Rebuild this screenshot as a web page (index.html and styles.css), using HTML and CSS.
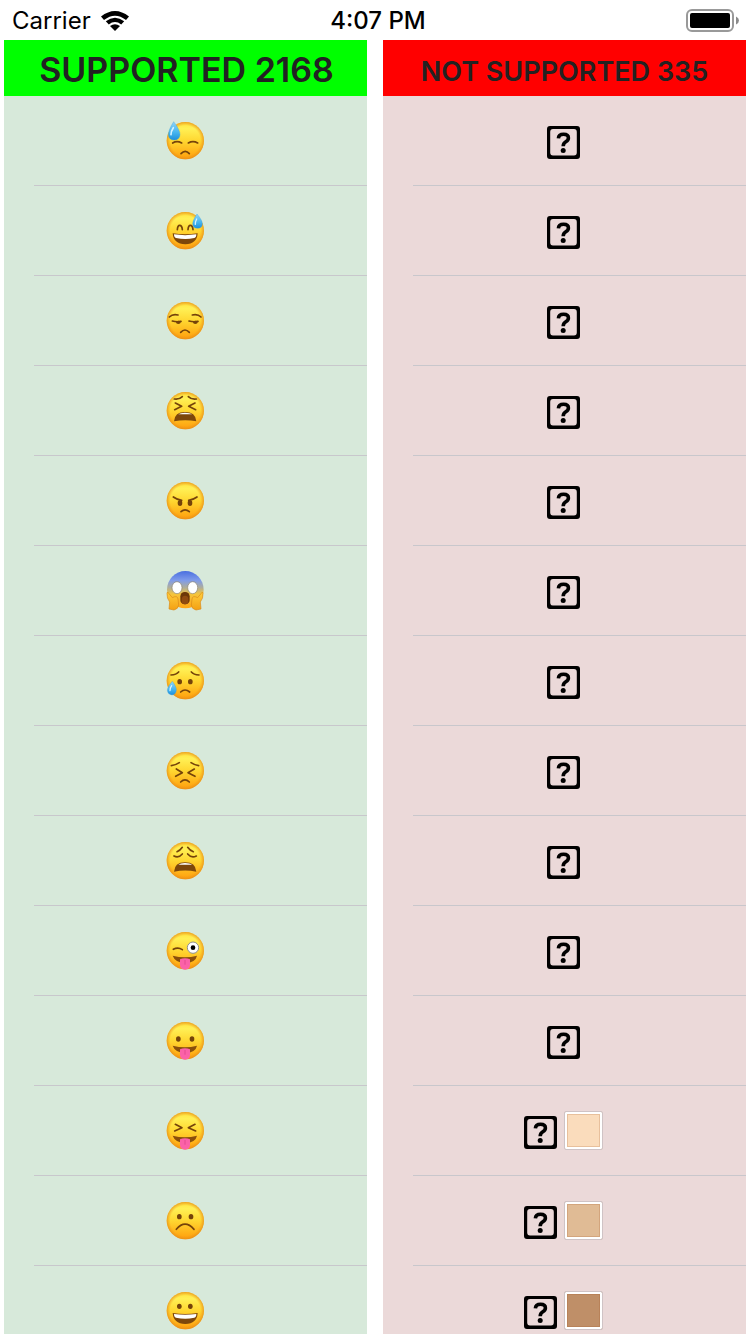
FILE: index.html
```html
<!DOCTYPE html>
<html lang="en">
<head>
<meta charset="utf-8">
<meta name="viewport" content="width=device-width, initial-scale=1">
<title>Emoji support</title>
<link rel="stylesheet" href="styles.css">
</head>
<body>
<svg class="defs" aria-hidden="true">
  <defs>
    <linearGradient id="skin" x1="0" y1="0" x2="0" y2="1">
      <stop offset="0" stop-color="#ffe23c"/><stop offset=".18" stop-color="#fff055"/><stop offset=".5" stop-color="#ffd731"/><stop offset="1" stop-color="#ff9d0c"/>
    </linearGradient>
    <radialGradient id="rim">
      <stop offset=".8" stop-color="#f09a1c" stop-opacity="0"/><stop offset="1" stop-color="#e58a18" stop-opacity=".75"/>
    </radialGradient>
    <linearGradient id="fright" x1="0" y1="0" x2="0" y2="1">
      <stop offset="0" stop-color="#4a6fe0"/><stop offset=".25" stop-color="#7f9bea"/><stop offset=".45" stop-color="#b0ae98"/><stop offset=".62" stop-color="#f5c53c"/><stop offset="1" stop-color="#ffa514"/>
    </linearGradient>
    <linearGradient id="water" x1="0" y1="0" x2="0" y2="1">
      <stop offset="0" stop-color="#8fd4f8"/><stop offset=".6" stop-color="#45b4ee"/><stop offset="1" stop-color="#1d8fdc"/>
    </linearGradient>
    <linearGradient id="palm" x1="0" y1="0" x2="0" y2="1">
      <stop offset="0" stop-color="#ffcf3e"/><stop offset="1" stop-color="#f3a013"/>
    </linearGradient>
    <symbol id="face" viewBox="30 18 120 120">
      <circle cx="91" cy="77" r="56" fill="url(#skin)"/>
      <circle cx="91" cy="77" r="56" fill="url(#rim)"/>
    </symbol>
    <symbol id="tongue" viewBox="30 18 120 120">
      <path d="M53 92Q90 101 126 92Q122 112 91 115Q60 112 53 92Z" fill="#8a4f0c"/>
      <path d="M75 103Q90 97 105 103V121Q104 134 90 134Q76 134 75 121Z" fill="#fb62a8"/>
      <path d="M90 105V119" stroke="#e44a90" stroke-width="3"/>
    </symbol>
    <symbol id="tofu" viewBox="0 0 33 36">
      <path fill-rule="evenodd" d="M3 3H30Q33 3 33 6V33Q33 36 30 36H3Q0 36 0 33V6Q0 3 3 3ZM6 6Q3.2 6 3.2 9V29.6Q3.2 32.6 6 32.6H27Q29.8 32.6 29.8 29.6V9Q29.8 6 27 6Z"/>
      <path d="M11.4 15.4Q11.6 11.2 16.6 11.2Q21.4 11.2 21.4 14.9Q21.4 17.2 18.8 18.7Q16.2 20.2 16.2 23.2" fill="none" stroke="#000" stroke-width="3.6"/>
      <circle cx="16.2" cy="27.4" r="2.5"/>
    </symbol>
  </defs>
</svg>

<header class="status">
  <div class="status-left">
    <span>Carrier</span>
    <svg class="wifi" viewBox="0 0 28 20" role="img" aria-label="Wi-Fi">
      <path d="M0 5.5Q14-5.5 28 5.5L25 9Q14 .5 3 9Z"/>
      <path d="M4.8 10.3Q14 3.3 23.2 10.3L20.2 13.4Q14 8.5 7.8 13.4Z"/>
      <path d="M9 15Q14 11.5 19 15L14 20Z"/>
    </svg>
  </div>
  <time class="clock">4:07 PM</time>
  <div class="status-right">
    <svg class="battery" viewBox="0 0 54 24" role="img" aria-label="Battery full">
      <rect x="1" y="1" width="46" height="21" rx="5" fill="#fff" stroke="#999" stroke-width="2"/>
      <rect x="4" y="4" width="40" height="15" rx="2"/>
      <path d="M50 7.5Q53 9 53 11.5Q53 14 50 15.5Z" fill="#8a8a8a"/>
    </svg>
  </div>
</header>

<main class="columns">
  <section class="column supported">
    <h2 class="title title-large">SUPPORTED 2168</h2>
    <ul class="list">
      <li class="row"><svg class="emoji" viewBox="30 18 120 120" role="img" aria-label="Downcast face with sweat"><use href="#face" x="30" y="18" width="120" height="120"/>
        <g class="ink"><path d="M53 84Q66 76 80 84M100 84Q114 76 128 84M78 116Q91 102 103 116"/></g>
        <path d="M56 20Q76 46 75 59Q74 74 58 75Q41 75 40 59Q40 45 56 20Z" fill="url(#water)" stroke="#3b9fda" stroke-width="1"/><path d="M55 38Q47 50 48 59" fill="none" stroke="#d5f2ff" stroke-width="5" stroke-linecap="round"/></svg></li>
      <li class="row"><svg class="emoji" viewBox="30 18 120 120" role="img" aria-label="Grinning face with sweat"><use href="#face" x="30" y="18" width="120" height="120"/>
        <g class="ink"><path d="M67 74Q68 61 74 61Q81 61 82 74M99 74Q100 61 106 61Q113 61 114 74"/></g>
        <path d="M53 85Q90 91 128 85Q126 117 91 118Q55 117 53 85Z" fill="#7d470b"/><path d="M57 88Q90 93 124 88Q124 98 118 99Q91 105 63 99Q57 98 57 88Z" fill="#fff"/>
        <path d="M126 27Q143 47 142 57Q141 70 128 70Q114 70 113 57Q113 46 126 27Z" fill="url(#water)" stroke="#3b9fda" stroke-width="1"/><path d="M125 42Q120 52 121 58" fill="none" stroke="#d5f2ff" stroke-width="4" stroke-linecap="round"/></svg></li>
      <li class="row"><svg class="emoji" viewBox="30 18 120 120" role="img" aria-label="Unamused face"><use href="#face" x="30" y="18" width="120" height="120"/>
        <g class="ink"><path d="M43 66Q53 56 69 60M112 60Q128 56 138 66M52 78Q65 82 78 79M102 78Q115 82 129 79M77 112Q90 98 103 112"/></g><ellipse class="dot" cx="70" cy="82" rx="7" ry="5"/><ellipse class="dot" cx="121" cy="82" rx="7" ry="5"/></svg></li>
      <li class="row"><svg class="emoji" viewBox="30 18 120 120" role="img" aria-label="Tired face"><use href="#face" x="30" y="18" width="120" height="120"/>
        <g class="ink"><path d="M58 42Q73 44 82 35M100 35Q109 44 124 42M61 54L80 64L59 74M120 54L101 64L122 74"/></g>
        <path d="M57 109Q59 81 90 81Q122 81 124 109Q91 102 57 109Z" fill="#7d470b"/><path d="M70 88Q76 83 90 83Q105 83 111 88Q91 88 70 88Z" fill="#fff"/></svg></li>
      <li class="row"><svg class="emoji" viewBox="30 18 120 120" role="img" aria-label="Angry face"><use href="#face" x="30" y="18" width="120" height="120"/>
        <g class="ink"><path d="M55 66Q66 74 80 76M101 76Q115 74 126 66M78 110Q90 99 103 110"/></g><ellipse class="dot" cx="75" cy="84" rx="7" ry="9"/><ellipse class="dot" cx="105" cy="84" rx="7" ry="9"/></svg></li>
      <li class="row"><svg class="emoji" viewBox="30 18 120 120" role="img" aria-label="Face screaming in fear"><ellipse cx="91" cy="74" rx="55" ry="56" fill="url(#fright)"/>
        <ellipse cx="66" cy="68" rx="15" ry="18" fill="#fff" stroke="#8d8370" stroke-width="2"/><ellipse cx="113" cy="68" rx="15" ry="18" fill="#fff" stroke="#8d8370" stroke-width="2"/>
        <rect x="76" y="81" width="28" height="37" rx="13" fill="#6c3709"/><path d="M80 114V102Q81 92 90 92Q100 92 100 102V114Q90 122 80 114Z" fill="#8f4a10"/>
        <path d="M42 132L44 111Q35 101 36 84Q37 77 42 86L52 98Q67 90 69 102L71 120Q70 132 57 135Z" fill="url(#palm)" stroke="#d98918" stroke-width="2"/>
        <path d="M138 132L136 111Q145 101 144 84Q143 77 138 86L128 98Q113 90 111 102L109 120Q110 132 123 135Z" fill="url(#palm)" stroke="#d98918" stroke-width="2"/></svg></li>
      <li class="row"><svg class="emoji" viewBox="30 18 120 120" role="img" aria-label="Sad but relieved face"><use href="#face" x="30" y="18" width="120" height="120"/>
        <g class="ink"><path d="M48 60Q64 59 71 51M109 51Q116 59 132 60M77 111Q90 99 104 111"/></g><ellipse class="dot" cx="74" cy="80" rx="7" ry="8"/><ellipse class="dot" cx="106" cy="80" rx="7" ry="8"/>
        <path d="M52 79Q65 97 64 105Q63 119 51 120Q38 119 37 106Q37 96 52 79Z" fill="url(#water)" stroke="#3b9fda" stroke-width="1"/><path d="M50 92Q44 100 45 107" fill="none" stroke="#d5f2ff" stroke-width="4" stroke-linecap="round"/></svg></li>
      <li class="row"><svg class="emoji" viewBox="30 18 120 120" role="img" aria-label="Persevering face"><use href="#face" x="30" y="18" width="120" height="120"/>
        <g class="ink"><path d="M49 62Q61 61 73 53M108 53Q120 61 131 62M64 72L82 83L62 94M118 72L99 83L120 94M77 111Q90 98 103 111"/></g></svg></li>
      <li class="row"><svg class="emoji" viewBox="30 18 120 120" role="img" aria-label="Weary face"><use href="#face" x="30" y="18" width="120" height="120"/>
        <g class="ink"><path d="M66 50Q76 46 82 37M98 37Q104 46 115 50M57 63Q70 71 82 57M98 57Q110 71 124 63"/></g>
        <path d="M57 110Q59 82 90 82Q122 82 124 110Q91 103 57 110Z" fill="#7d470b"/><path d="M70 89Q76 84 90 84Q105 84 111 89Q91 89 70 89Z" fill="#fff"/></svg></li>
      <li class="row"><svg class="emoji" viewBox="30 18 120 120" role="img" aria-label="Winking face with tongue"><use href="#face" x="30" y="18" width="120" height="120"/>
        <use href="#tongue" x="30" y="18" width="120" height="120"/><g class="ink"><path d="M55 73Q69 65 82 74"/></g>
        <circle cx="114" cy="68" r="17" fill="#fff" stroke="#8f8f8f" stroke-width="3"/><circle cx="114" cy="68" r="7"/></svg></li>
      <li class="row"><svg class="emoji" viewBox="30 18 120 120" role="img" aria-label="Face with tongue"><use href="#face" x="30" y="18" width="120" height="120"/>
        <use href="#tongue" x="30" y="18" width="120" height="120"/><ellipse class="dot" cx="70" cy="72" rx="7" ry="8"/><ellipse class="dot" cx="111" cy="72" rx="7" ry="8"/></svg></li>
      <li class="row"><svg class="emoji" viewBox="30 18 120 120" role="img" aria-label="Squinting face with tongue"><use href="#face" x="30" y="18" width="120" height="120"/>
        <use href="#tongue" x="30" y="18" width="120" height="120"/><g class="ink"><path d="M61 58L81 68L59 78M120 58L100 68L122 78"/></g></svg></li>
      <li class="row"><svg class="emoji" viewBox="30 18 120 120" role="img" aria-label="Frowning face"><use href="#face" x="30" y="18" width="120" height="120"/>
        <g class="ink"><path d="M64 103Q90 72 117 103"/></g><ellipse class="dot" cx="73" cy="65" rx="7" ry="8"/><ellipse class="dot" cx="108" cy="65" rx="7" ry="8"/></svg></li>
      <li class="row"><svg class="emoji" viewBox="30 18 120 120" role="img" aria-label="Grinning face"><use href="#face" x="30" y="18" width="120" height="120"/>
        <path d="M53 84Q90 90 128 84Q126 116 91 117Q55 116 53 84Z" fill="#7d470b"/><path d="M57 87Q90 92 124 87Q124 97 118 98Q91 104 63 98Q57 97 57 87Z" fill="#fff"/>
        <ellipse class="dot" cx="73" cy="64" rx="7" ry="8"/><ellipse class="dot" cx="106" cy="64" rx="7" ry="8"/></svg></li>
    </ul>
  </section>

  <section class="column unsupported">
    <h2 class="title title-small">NOT SUPPORTED 335</h2>
    <ul class="list">
      <li class="row"><svg class="tofu" role="img" aria-label="Missing glyph"><use href="#tofu"/></svg></li>
      <li class="row"><svg class="tofu" role="img" aria-label="Missing glyph"><use href="#tofu"/></svg></li>
      <li class="row"><svg class="tofu" role="img" aria-label="Missing glyph"><use href="#tofu"/></svg></li>
      <li class="row"><svg class="tofu" role="img" aria-label="Missing glyph"><use href="#tofu"/></svg></li>
      <li class="row"><svg class="tofu" role="img" aria-label="Missing glyph"><use href="#tofu"/></svg></li>
      <li class="row"><svg class="tofu" role="img" aria-label="Missing glyph"><use href="#tofu"/></svg></li>
      <li class="row"><svg class="tofu" role="img" aria-label="Missing glyph"><use href="#tofu"/></svg></li>
      <li class="row"><svg class="tofu" role="img" aria-label="Missing glyph"><use href="#tofu"/></svg></li>
      <li class="row"><svg class="tofu" role="img" aria-label="Missing glyph"><use href="#tofu"/></svg></li>
      <li class="row"><svg class="tofu" role="img" aria-label="Missing glyph"><use href="#tofu"/></svg></li>
      <li class="row"><svg class="tofu" role="img" aria-label="Missing glyph"><use href="#tofu"/></svg></li>
      <li class="row"><svg class="tofu" role="img" aria-label="Missing glyph"><use href="#tofu"/></svg><span class="swatch tone-light"></span></li>
      <li class="row"><svg class="tofu" role="img" aria-label="Missing glyph"><use href="#tofu"/></svg><span class="swatch tone-medium-light"></span></li>
      <li class="row"><svg class="tofu" role="img" aria-label="Missing glyph"><use href="#tofu"/></svg><span class="swatch tone-medium"></span></li>
    </ul>
  </section>
</main>
</body>
</html>
```
FILE: styles.css
```css
* {
  box-sizing: border-box;
}

body {
  margin: 0;
  height: 100vh;
  display: flex;
  flex-direction: column;
  background: #fff;
  color: #000;
  font-family: Inter, "Liberation Sans", sans-serif;
}

.defs {
  position: absolute;
  width: 0;
  height: 0;
}

.status {
  display: grid;
  grid-template-columns: 1fr auto 1fr;
  align-items: center;
  height: 40px;
  padding: 2px 10px 0 12px;
  font-size: 24px;
  line-height: 38px;
}

.status-left {
  display: flex;
  align-items: center;
  gap: 10px;
}

.wifi {
  width: 28px;
  height: 20px;
}

.clock {
  padding-left: 4px;
  font-weight: 500;
}

.status-right {
  display: flex;
  justify-content: flex-end;
}

.battery {
  width: 54px;
  height: 24px;
}

.columns {
  flex: 1;
  min-height: 0;
  display: grid;
  grid-template-columns: 1fr 1fr;
  grid-template-rows: minmax(0, 1fr);
  gap: 16px;
  padding: 0 4px;
}

.column {
  display: flex;
  flex-direction: column;
  min-height: 0;
}

.title {
  flex: none;
  height: 56px;
  margin: 0;
  color: #222;
  font-weight: 600;
  text-align: center;
  white-space: nowrap;
}

.title-large {
  padding-left: 2px;
  font-size: 34px;
  line-height: 60px;
}

.title-small {
  font-size: 27px;
  line-height: 64px;
}

.supported .title {
  background: #0f0;
}

.unsupported .title {
  background: #f00;
}

.list {
  flex: 1;
  min-height: 0;
  margin: 0;
  padding: 0;
  overflow-y: auto;
  scrollbar-width: none;
  list-style: none;
}

.supported .list {
  background: #d7e9da;
}

.unsupported .list {
  background: #ebd9d9;
}

.row {
  display: flex;
  align-items: center;
  justify-content: center;
  gap: 7px;
  height: 90px;
  padding: 0 2px 1px 0;
  background: linear-gradient(#c8c7cc, #c8c7cc) 30px 89px / 100% 1px no-repeat;
}

.emoji {
  width: 40px;
  height: 40px;
}

.ink {
  fill: none;
  stroke: #75430a;
  stroke-width: 5;
  stroke-linecap: round;
  stroke-linejoin: round;
}

.dot {
  fill: #75430a;
}

.tofu {
  width: 33px;
  height: 36px;
}

.swatch {
  width: 39px;
  height: 39px;
  border: 1px solid #cfc3c5;
  border-radius: 2px;
  box-shadow: inset 0 0 0 2px #fff, inset 0 0 0 3px rgba(160, 80, 30, 0.2);
}

.tone-light {
  background: #fadcbc;
}

.tone-medium-light {
  background: #e0bb95;
}

.tone-medium {
  background: #bf8f68;
}
```
